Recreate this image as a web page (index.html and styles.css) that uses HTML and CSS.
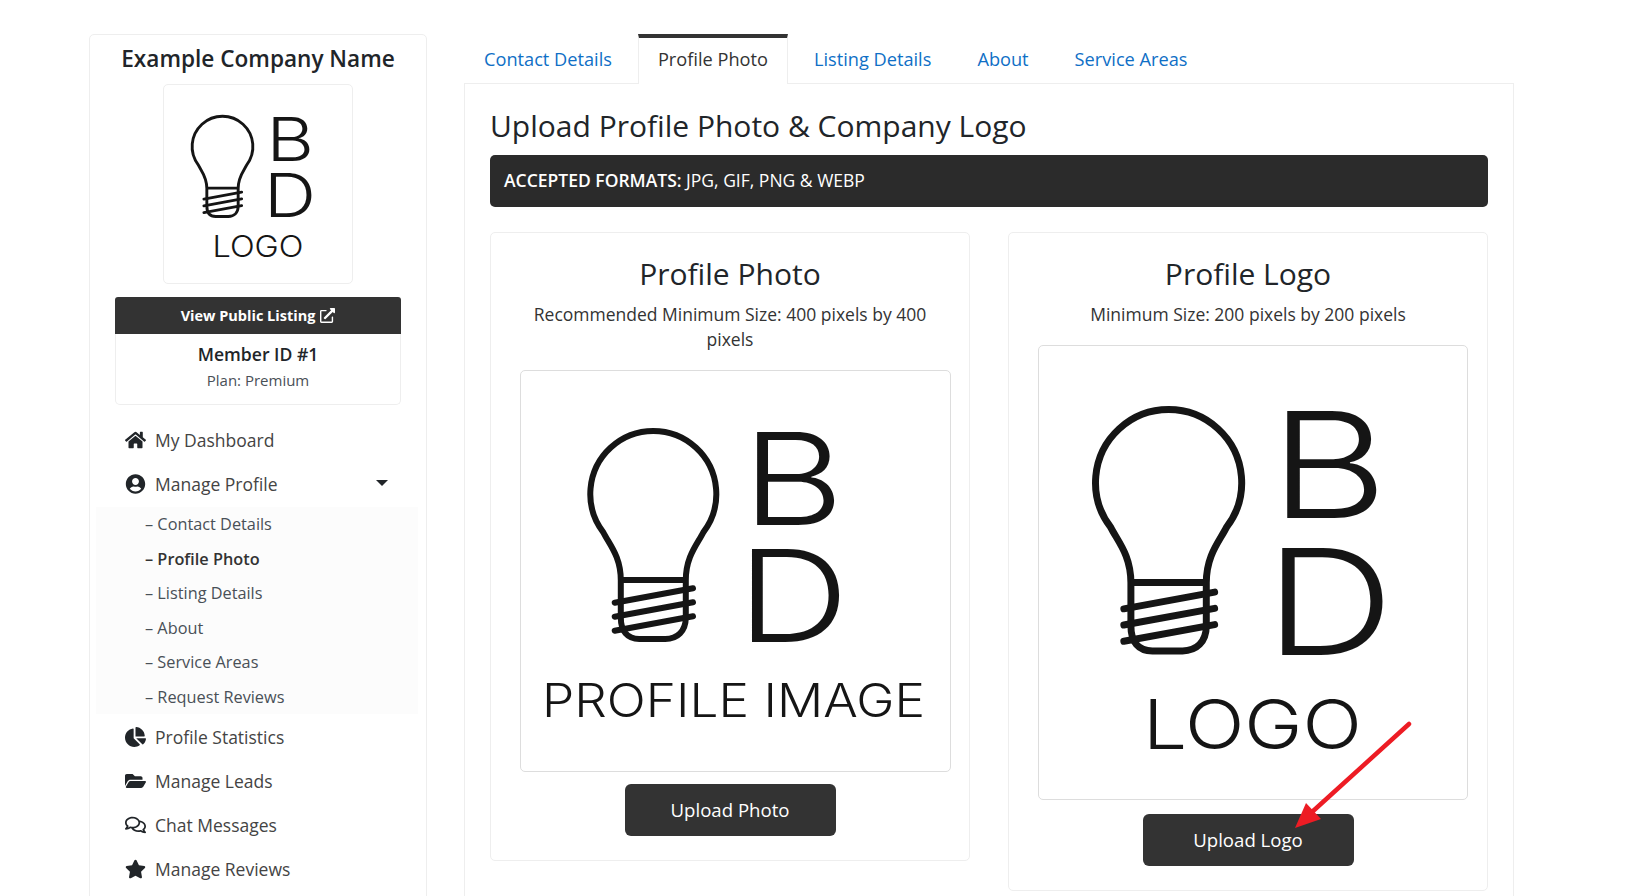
FILE: index.html
```html
<!DOCTYPE html>
<html>
  <head>
    <meta charset="utf-8">
    <meta name="viewport" content="width=device-width, initial-scale=1">
    <title>Upload Profile Photo</title>
    <link rel="stylesheet" href="styles.css">
  </head>
  <body>
    <div class="page">
      <aside class="sidebar">
        <h2 class="company">Example Company Name</h2>
        <div class="company-logo">
          <svg viewBox="164 85 188 197" width="188" height="197">
            <use href="#bulb" transform="translate(222.5 115) scale(0.482)"></use>
            <text class="mark" x="266.5" y="160.7" font-size="60" textLength="47.5" lengthAdjust="spacingAndGlyphs">B</text>
            <text class="mark" x="264" y="217.3" font-size="60" textLength="52" lengthAdjust="spacingAndGlyphs">D</text>
            <text class="mark thin" x="212.5" y="257.3" font-size="29.5" textLength="91" lengthAdjust="spacingAndGlyphs">LOGO</text>
          </svg>
        </div>
        <div class="member">
          <a class="listing-btn" href="#">View Public Listing
            <svg class="ext" viewBox="0 0 512 512"><path d="M432,288H416a16,16,0,0,0-16,16V458a6,6,0,0,1-6,6H54a6,6,0,0,1-6-6V118a6,6,0,0,1,6-6H208a16,16,0,0,0,16-16V80a16,16,0,0,0-16-16H48A48,48,0,0,0,0,112V464a48,48,0,0,0,48,48H400a48,48,0,0,0,48-48V304A16,16,0,0,0,432,288ZM488,0h-128c-21.37,0-32.05,25.91-17,41l35.73,35.73L135,320.37a24,24,0,0,0,0,34L157.67,377a24,24,0,0,0,34,0L435.28,133.32,471,169c15,15,41,4.5,41-17V24A24,24,0,0,0,488,0Z"/></svg>
          </a>
          <div class="member-id">Member ID #1</div>
          <div class="member-plan">Plan: Premium</div>
        </div>
        <nav class="side-nav">
          <a class="nav-row" href="#">
            <svg class="nav-icon" viewBox="0 0 576 512"><path d="M280.37 148.26L96 300.11V464a16 16 0 0 0 16 16l112.06-.29a16 16 0 0 0 15.92-16V368a16 16 0 0 1 16-16h64a16 16 0 0 1 16 16v95.64a16 16 0 0 0 16 16.05L464 480a16 16 0 0 0 16-16V300L295.67 148.26a12.19 12.19 0 0 0-15.3 0zM571.6 251.47L488 182.56V44.05a12 12 0 0 0-12-12h-56a12 12 0 0 0-12 12v72.61L318.47 43a48 48 0 0 0-61 0L4.34 251.47a12 12 0 0 0-1.6 16.9l25.5 31A12 12 0 0 0 45.15 301l235.22-193.74a12.19 12.19 0 0 1 15.3 0L530.9 301a12 12 0 0 0 16.9-1.6l25.5-31a12 12 0 0 0-1.7-16.93z"/></svg>
            My Dashboard
          </a>
          <a class="nav-row" href="#">
            <svg class="nav-icon" viewBox="0 0 496 512"><path d="M248 8C111 8 0 119 0 256s111 248 248 248 248-111 248-248S385 8 248 8zm0 96c48.6 0 88 39.4 88 88s-39.4 88-88 88-88-39.4-88-88 39.4-88 88-88zm0 344c-58.7 0-111.3-26.6-146.5-68.2 18.8-35.4 55.6-59.8 98.5-59.8 2.4 0 4.8.4 7.1 1.1 13 4.2 26.6 6.9 40.9 6.9 14.3 0 28-2.7 40.9-6.9 2.3-.7 4.7-1.1 7.1-1.1 42.9 0 79.7 24.4 98.5 59.8C359.3 421.4 306.7 448 248 448z"/></svg>
            Manage Profile
            <span class="caret"></span>
          </a>
          <div class="sub-nav">
            <a href="#">– Contact Details</a>
            <a class="current" href="#">– Profile Photo</a>
            <a href="#">– Listing Details</a>
            <a href="#">– About</a>
            <a href="#">– Service Areas</a>
            <a href="#">– Request Reviews</a>
          </div>
          <a class="nav-row" href="#">
            <svg class="nav-icon" viewBox="0 0 544 512"><path d="M527.79 288H290.5l158.03 158.03c6.04 6.04 15.98 6.53 22.19.68 38.7-36.46 65.32-85.61 73.13-140.86 1.34-9.46-6.51-17.85-16.06-17.85zm-15.83-64.8C503.72 103.74 408.26 8.28 288.8.04 279.68-.59 272 7.1 272 16.24V240h223.77c9.14 0 16.82-7.68 16.19-16.8zM224 288V50.71c0-9.55-8.39-17.4-17.84-16.06C86.99 51.49-4.1 155.6.14 280.37 4.5 408.51 114.83 513.59 243.03 511.98c50.4-.63 96.97-16.87 135.26-44.03 7.9-5.6 8.42-17.23 1.57-24.08L224 288z"/></svg>
            Profile Statistics
          </a>
          <a class="nav-row" href="#">
            <svg class="nav-icon" viewBox="0 0 576 512"><path d="M572.694 292.093L500.27 416.248A63.997 63.997 0 0 1 444.989 448H45.025c-18.523 0-30.064-20.093-20.731-36.093l72.424-124.155A64 64 0 0 1 152 256h399.964c18.523 0 30.064 20.093 20.73 36.093zM152 224h328v-48c0-26.51-21.49-48-48-48H272l-64-64H48C21.49 64 0 85.49 0 112v278.046l69.077-118.418C86.214 242.25 117.989 224 152 224z"/></svg>
            Manage Leads
          </a>
          <a class="nav-row" href="#">
            <svg class="nav-icon" viewBox="0 0 576 512"><path d="M532 386.2c27.5-27.1 44-61.1 44-98.2 0-80-76.5-146.1-176.2-157.9C368.3 72.5 294.3 32 208 32 93.1 32 0 103.6 0 192c0 37 16.5 71 44 98.2-15.3 30.7-37.3 54.5-37.7 54.9-6.3 6.7-8.1 16.5-4.4 25 3.6 8.5 12 14 21.2 14 53.5 0 96.7-20.2 125.2-38.8 9.2 2.1 18.7 3.7 28.4 4.9C208.1 407.6 281.8 448 368 448c20.8 0 40.8-2.4 59.8-6.8C456.3 459.7 499.4 480 553 480c9.2 0 17.5-5.5 21.2-14 3.6-8.5 1.9-18.3-4.4-25-.4-.3-22.5-24.1-37.8-54.8zm-392.8-92.3L122.1 305c-14.1 9.1-28.5 16.3-43.1 21.4 2.7-4.7 5.4-9.7 8-14.8l15.5-31.1L77.7 256C64.2 242.6 48 220.7 48 192c0-60.7 73.3-112 160-112s160 51.3 160 112-73.3 112-160 112c-16.5 0-33-1.9-49-5.6l-19.8-4.5zM498.3 352l-24.7 24.4 15.5 31.1c2.6 5.1 5.3 10.1 8 14.8-14.6-5.1-29-12.3-43.1-21.4l-17.1-11.1-19.9 4.6c-16 3.7-32.5 5.6-49 5.6-54 0-102.2-20.1-131.3-49.7C338 339.5 416 272.9 416 192c0-3.4-.4-6.7-.7-10C479.7 196.5 528 238.8 528 288c0 28.7-16.2 50.6-29.7 64z"/></svg>
            Chat Messages
          </a>
          <a class="nav-row" href="#">
            <svg class="nav-icon" viewBox="0 0 576 512"><path d="M259.3 17.8L194 150.2 47.9 171.5c-26.2 3.8-36.7 36.1-17.7 54.6l105.7 103-25 145.5c-4.5 26.3 23.2 46 46.4 33.7L288 439.6l130.7 68.7c23.2 12.2 50.9-7.4 46.4-33.7l-25-145.5 105.7-103c19-18.5 8.5-50.8-17.7-54.6L382 150.2 316.7 17.8c-11.7-23.6-45.6-23.9-57.4 0z"/></svg>
            Manage Reviews
          </a>
        </nav>
      </aside>

      <main class="content">
        <ul class="tabs">
          <li><a href="#">Contact Details</a></li>
          <li class="active"><a href="#">Profile Photo</a></li>
          <li><a href="#">Listing Details</a></li>
          <li><a href="#">About</a></li>
          <li><a href="#">Service Areas</a></li>
        </ul>
        <div class="pane">
          <h1 class="pane-title">Upload Profile Photo &amp; Company Logo</h1>
          <div class="formats"><b>ACCEPTED FORMATS:</b> JPG, GIF, PNG &amp; WEBP</div>
          <div class="uploads">
            <section class="upload-card">
              <h3>Profile Photo</h3>
              <p>Recommended Minimum Size: 400 pixels by 400 pixels</p>
              <div class="pic">
                <svg viewBox="521 371 429 399" width="429" height="399">
                  <defs>
                    <g id="bulb" fill="none" stroke="#151515" stroke-width="6" stroke-linecap="round">
                      <path d="M-32.5 152C-32.5 128 -44 116 -50 104A63 63 0 1 1 50 104C44 116 32.5 128 32.5 152V189C32.5 203 24 210.7 12 210.7H-14C-26 210.7 -32.5 203 -32.5 189Z"/>
                      <path stroke-linecap="butt" d="M-32.5 151.7H32.5"/>
                      <path d="M-38.6 174.4L39.7 160M-38.6 188.4L39.7 174M-38.6 202.4L39.7 188"/>
                    </g>
                  </defs>
                  <use href="#bulb" transform="translate(653.3 428.3)"></use>
                  <text class="mark" x="742" y="525" font-size="128" textLength="102" lengthAdjust="spacingAndGlyphs">B</text>
                  <text class="mark" x="737" y="642" font-size="128" textLength="112" lengthAdjust="spacingAndGlyphs">D</text>
                  <text class="mark thin" x="542" y="717" font-size="46" textLength="383" lengthAdjust="spacingAndGlyphs">PROFILE IMAGE</text>
                </svg>
              </div>
              <a class="upload-btn" href="#">Upload Photo</a>
            </section>
            <section class="upload-card">
              <h3>Profile Logo</h3>
              <p>Minimum Size: 200 pixels by 200 pixels</p>
              <div class="pic pic-logo">
                <svg viewBox="1039 346 428 452" width="428" height="452">
                  <use href="#bulb" transform="translate(1168.6 406.5) scale(1.16)"></use>
                  <text class="mark" x="1269.7" y="518" font-size="147" textLength="118" lengthAdjust="spacingAndGlyphs">B</text>
                  <text class="mark" x="1265" y="655" font-size="147" textLength="129" lengthAdjust="spacingAndGlyphs">D</text>
                  <text class="mark thin" x="1143" y="749" font-size="69" textLength="219" lengthAdjust="spacingAndGlyphs">LOGO</text>
                </svg>
              </div>
              <a class="upload-btn" href="#">Upload Logo</a>
              <svg class="arrow" viewBox="0 0 130 120" width="130" height="120">
                <path d="M117 4L20 92" fill="none" stroke="#ed1c24" stroke-width="4.5" stroke-linecap="round"/>
                <path d="M3 108L14 83 29 99Z" fill="#ed1c24"/>
              </svg>
            </section>
          </div>
        </div>
      </main>
    </div>
  </body>
</html>
```

FILE: styles.css
```css
html, body {
  height: 100%;
  overflow: hidden;
}

body {
  margin: 0;
  background: #fff;
  color: #212529;
  font-family: "Open Sans", sans-serif;
  font-size: 16px;
  line-height: 1.5;
}

a {
  text-decoration: none;
  color: inherit;
}

.page {
  display: flex;
  align-items: flex-start;
  gap: 37px;
  padding: 34px 122px 0 89px;
}

/* sidebar */
.sidebar {
  flex: 0 0 338px;
  box-sizing: border-box;
  height: 900px;
  border: 1px solid #eee;
  border-radius: 5px;
  padding: 0 6px;
}

.company {
  margin: 9px 0 11px;
  text-align: center;
  font-size: 22.6px;
  font-weight: 550;
  line-height: 29px;
}

.company-logo {
  box-sizing: border-box;
  width: 190px;
  height: 200px;
  margin: 0 auto 13px;
  border: 1px solid #eee;
  border-radius: 5px;
}

.company-logo svg,
.pic svg {
  display: block;
}

.mark {
  font-family: Inter, "Liberation Sans", sans-serif;
  font-weight: 300;
  fill: #151515;
}

.thin {
  font-weight: 300;
}

.member {
  width: 286px;
  height: 108px;
  box-sizing: border-box;
  margin: 0 auto 13px;
  border: 1px solid #eee;
  border-top: 0;
  border-radius: 5px;
  text-align: center;
}

.listing-btn {
  display: flex;
  align-items: center;
  justify-content: center;
  gap: 5px;
  height: 37px;
  margin: 0 -1px;
  background: #333;
  border-radius: 3px 3px 0 0;
  color: #fff;
  font-size: 14.5px;
  font-weight: 700;
}

.ext {
  width: 15px;
  height: 15px;
  fill: #fff;
}

.member-id {
  margin-top: 8px;
  font-size: 17.6px;
  font-weight: 550;
  line-height: 24px;
}

.member-plan {
  margin-top: 3px;
  font-size: 15px;
  line-height: 22px;
  color: #495057;
}

.nav-row {
  display: flex;
  align-items: center;
  height: 44px;
  padding-left: 29px;
  color: #444;
  font-size: 17.5px;
}

.nav-icon {
  flex: 0 0 21px;
  height: 20px;
  margin-right: 9px;
  fill: #212529;
}

.caret {
  width: 0;
  height: 0;
  margin: -3px 32px 0 auto;
  border-left: 6px solid transparent;
  border-right: 6px solid transparent;
  border-top: 6px solid #212529;
}

.sub-nav {
  display: flex;
  flex-direction: column;
  height: 207px;
  margin: 1px 2px 1px 0;
  background: #fcfcfc;
}

.sub-nav a {
  flex: 1;
  display: flex;
  align-items: center;
  padding-left: 49px;
  color: #495057;
  font-size: 16.3px;
}

.sub-nav a.current {
  color: #333;
  font-weight: 600;
}

/* tabs + main pane */
.content {
  flex: 1;
  min-width: 0;
}

.tabs {
  display: flex;
  gap: 6px;
  margin: 0;
  padding: 0;
  list-style: none;
  height: 50px;
}

.tabs a {
  display: block;
  padding: 11px 20px 0;
  color: #0f6fc6;
  font-size: 18.2px;
  line-height: 28px;
}

.tabs .active {
  position: relative;
  z-index: 1;
  height: 50px;
  box-sizing: border-box;
  border: 1px solid #eee;
  border-top: 4px solid #333;
  border-bottom: 0;
  background: #fff;
}

.tabs .active a {
  padding: 7px 19px 0;
  color: #333;
}

.pane {
  box-sizing: border-box;
  height: 830px;
  margin-top: -1px;
  padding: 24px 25px 0;
  border: 1px solid #eee;
}

.pane-title {
  margin: 0 0 11px;
  font-size: 30px;
  font-weight: 400;
  line-height: 36px;
}

.formats {
  box-sizing: border-box;
  height: 52px;
  padding: 0 14px;
  border-radius: 5px;
  background: #2b2b2b;
  color: #fff;
  font-size: 17.5px;
  line-height: 50px;
}

.formats b {
  font-weight: 600;
}

.uploads {
  display: flex;
  align-items: flex-start;
  gap: 38px;
  margin-top: 25px;
}

.upload-card {
  position: relative;
  flex: 0 0 480px;
  min-width: 0;
  box-sizing: border-box;
  padding: 21px 20px 24px;
  border: 1px solid #eee;
  border-radius: 5px;
  text-align: center;
}

.upload-card h3 {
  margin: 0 0 8px;
  font-size: 30px;
  font-weight: 400;
  line-height: 40px;
}

.upload-card p {
  margin: 0 0 18px;
  padding: 0 20px;
  font-size: 17.5px;
  line-height: 25px;
  color: #333;
}

.pic {
  box-sizing: border-box;
  width: 431px;
  height: 402px;
  margin-left: 9px;
  border: 1px solid #ddd;
  border-radius: 5px;
}

.pic-logo {
  width: 430px;
  height: 455px;
}

.upload-btn {
  display: block;
  width: 211px;
  height: 52px;
  margin: 12px auto 0;
  border-radius: 6px;
  background: #333;
  color: #fff;
  font-size: 18.6px;
  line-height: 52px;
}

.pic-logo + .upload-btn {
  margin-top: 14px;
}

.arrow {
  position: absolute;
  left: 283px;
  top: 487px;
}
```
